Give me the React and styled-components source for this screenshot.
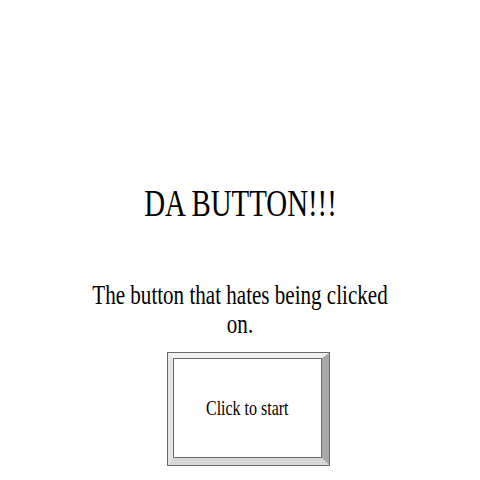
import styled, { createGlobalStyle } from 'styled-components'

const GlobalStyle = createGlobalStyle`
	html, body {
		margin: 0;
		padding: 0;
		background: #ffffff;
	}
	body {
		font-family: 'Liberation Serif', 'Times New Roman', serif;
		color: #000000;
	}
`

function App() {
	return (
		<>
			<GlobalStyle />
			<Page>
				<Title>DA BUTTON!!!</Title>
				<Subtitle>The button that hates being clicked on.</Subtitle>
				<StartButton type='button'>
					<Label>Click to start</Label>
				</StartButton>
			</Page>
		</>
	)
}

export default App

const Page = styled.main`
	width: 480px;
	height: 480px;
	display: flex;
	flex-direction: column;
	align-items: center;
	padding-top: 186px;
	box-sizing: border-box;
	text-align: center;
`
// narrow serif look: glyphs are squeezed horizontally
const Title = styled.h1`
	margin: 0;
	font-size: 37px;
	font-weight: normal;
	line-height: 36px;
	transform: scaleX(0.78);
`
const Subtitle = styled.p`
	margin: 59px 0 0;
	width: 384px;
	font-size: 27px;
	line-height: 29px;
	transform: scaleX(0.78);
`
const StartButton = styled.button`
	margin: 14px 0 0 17px;
	padding: 0;
	width: 161px;
	height: 112px;
	display: grid;
	place-items: center;
	font-family: inherit;
	color: #000000;
	background: #ffffff;
	border-style: solid;
	border-width: 5px 7px 7px 5px;
	border-color: #f0f0f0 #a8a8a8 #d8d8d8 #e4e4e4;
	outline: 1px solid #6a6a6a;
	box-shadow: inset 0 0 0 1px #6a6a6a;
	cursor: pointer;
`
const Label = styled.span`
	font-size: 21px;
	transform: scaleX(0.76);
`
